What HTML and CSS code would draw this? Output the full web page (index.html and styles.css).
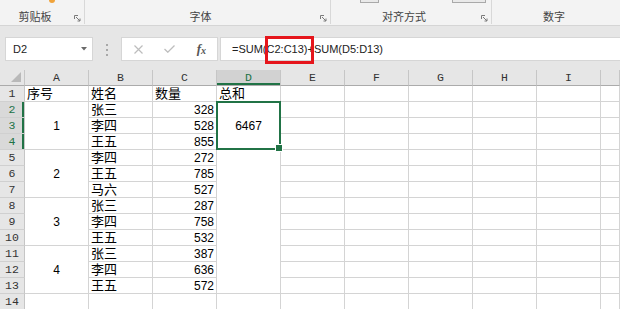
FILE: index.html
```html
<!DOCTYPE html>
<html lang="zh">
<head>
<meta charset="utf-8">
<link rel="stylesheet" href="styles.css">
</head>
<body>
<div class="ribbon">
  <div class="group g1">
    <div class="tools"><span class="paste"></span></div>
    <div class="labelrow"><span class="label">剪贴板</span><svg class="launch" width="7" height="7" viewBox="0 0 7 7"><path d="M0.5 4V0.5H4M2 2L6 6M6 3.5V6H3.5" fill="none" stroke="#7a7a7a" stroke-width="1"/></svg></div>
  </div>
  <div class="group g2">
    <div class="tools"></div>
    <div class="labelrow"><span class="label">字体</span><svg class="launch" width="7" height="7" viewBox="0 0 7 7"><path d="M0.5 4V0.5H4M2 2L6 6M6 3.5V6H3.5" fill="none" stroke="#7a7a7a" stroke-width="1"/></svg></div>
  </div>
  <div class="group g3">
    <div class="tools"><span class="btn b1"></span><span class="btn b2"></span></div>
    <div class="labelrow"><span class="label">对齐方式</span><svg class="launch" width="7" height="7" viewBox="0 0 7 7"><path d="M0.5 4V0.5H4M2 2L6 6M6 3.5V6H3.5" fill="none" stroke="#7a7a7a" stroke-width="1"/></svg></div>
  </div>
  <div class="group g4">
    <div class="tools"></div>
    <div class="labelrow"><span class="label">数字</span></div>
  </div>
</div>

<div class="fbar">
  <div class="namebox"><span>D2</span><svg width="6" height="4" viewBox="0 0 6 4"><path d="M0 0H6L3 3.5Z" fill="#6a6a6a"/></svg></div>
  <div class="dots"><i></i><i></i><i></i></div>
  <div class="funcbox">
    <span class="slot"><svg width="9" height="9" viewBox="0 0 9 9"><path d="M0.5 0.5L8.5 8.5M8.5 0.5L0.5 8.5" stroke="#bdbdbd" stroke-width="1.2"/></svg></span>
    <span class="slot"><svg width="11" height="8" viewBox="0 0 11 8"><path d="M0.5 4L3.8 7.2L10.5 0.5" fill="none" stroke="#bdbdbd" stroke-width="1.3"/></svg></span>
    <span class="slot fx">f<span class="x">x</span></span>
  </div>
  <div class="formula"><span class="ftext">=SUM(C2:C13)+SUM(D5:D13)</span><span class="redbox"></span></div>
</div>

<div class="sheet">
  <div class="corner"><svg width="10" height="10" viewBox="0 0 10 10"><path d="M10 0V10H0Z" fill="#b9b9b9"/></svg></div>
  <div class="ch">A</div><div class="ch">B</div><div class="ch">C</div><div class="ch selh">D</div><div class="ch">E</div><div class="ch">F</div><div class="ch">G</div><div class="ch">H</div><div class="ch">I</div><div class="ch"></div>

  <div class="rh">1</div><div class="c t">序号</div><div class="c t">姓名</div><div class="c t">数量</div><div class="c t">总和</div><div class="c"></div><div class="c"></div><div class="c"></div><div class="c"></div><div class="c"></div><div class="c"></div>

  <div class="rh selr">2</div><div class="c m r3">1</div><div class="c t">张三</div><div class="c n">328</div><div class="c m r3 sel">6467</div><div class="c"></div><div class="c"></div><div class="c"></div><div class="c"></div><div class="c"></div><div class="c"></div>
  <div class="rh selr">3</div><div class="c t">李四</div><div class="c n">528</div><div class="c"></div><div class="c"></div><div class="c"></div><div class="c"></div><div class="c"></div><div class="c"></div>
  <div class="rh selr">4</div><div class="c t">王五</div><div class="c n">855</div><div class="c"></div><div class="c"></div><div class="c"></div><div class="c"></div><div class="c"></div><div class="c"></div>

  <div class="rh">5</div><div class="c m r3">2</div><div class="c t">李四</div><div class="c n">272</div><div class="c r9"></div><div class="c"></div><div class="c"></div><div class="c"></div><div class="c"></div><div class="c"></div><div class="c"></div>
  <div class="rh">6</div><div class="c t">王五</div><div class="c n">785</div><div class="c"></div><div class="c"></div><div class="c"></div><div class="c"></div><div class="c"></div><div class="c"></div>
  <div class="rh">7</div><div class="c t">马六</div><div class="c n">527</div><div class="c"></div><div class="c"></div><div class="c"></div><div class="c"></div><div class="c"></div><div class="c"></div>

  <div class="rh">8</div><div class="c m r3">3</div><div class="c t">张三</div><div class="c n">287</div><div class="c"></div><div class="c"></div><div class="c"></div><div class="c"></div><div class="c"></div><div class="c"></div>
  <div class="rh">9</div><div class="c t">李四</div><div class="c n">758</div><div class="c"></div><div class="c"></div><div class="c"></div><div class="c"></div><div class="c"></div><div class="c"></div>
  <div class="rh">10</div><div class="c t">王五</div><div class="c n">532</div><div class="c"></div><div class="c"></div><div class="c"></div><div class="c"></div><div class="c"></div><div class="c"></div>

  <div class="rh">11</div><div class="c m r3">4</div><div class="c t">张三</div><div class="c n">387</div><div class="c"></div><div class="c"></div><div class="c"></div><div class="c"></div><div class="c"></div><div class="c"></div>
  <div class="rh">12</div><div class="c t">李四</div><div class="c n">636</div><div class="c"></div><div class="c"></div><div class="c"></div><div class="c"></div><div class="c"></div><div class="c"></div>
  <div class="rh">13</div><div class="c t">王五</div><div class="c n">572</div><div class="c"></div><div class="c"></div><div class="c"></div><div class="c"></div><div class="c"></div><div class="c"></div>

  <div class="rh">14</div><div class="c"></div><div class="c"></div><div class="c"></div><div class="c"></div><div class="c"></div><div class="c"></div><div class="c"></div><div class="c"></div><div class="c"></div><div class="c"></div>
</div>
</body>
</html>
```

FILE: styles.css
```css
* { box-sizing: border-box; }
html, body { margin: 0; padding: 0; }
body {
  width: 620px;
  height: 309px;
  overflow: hidden;
  background: #fff;
  font-family: "Liberation Sans", "Noto Sans CJK SC", sans-serif;
}

/* Ribbon */
.ribbon {
  display: flex;
  height: 26px;
  background: #f3f3f3;
  border-bottom: 1px solid #d5d5d5;
}
.group {
  display: flex;
  flex-direction: column;
  justify-content: space-between;
  border-right: 1px solid #d8d8d8;
  height: 24px;
}
.g1 { width: 85px; }
.g2 { width: 246px; }
.g3 { width: 161px; }
.g4 { flex: 1; border-right: none; padding-right: 4px; }
.tools { display: flex; height: 3px; }
.paste {
  margin-left: 49px;
  width: 6px;
  height: 3px;
  background: #f0a33a;
  border-radius: 0 0 3px 3px;
}
.btn {
  height: 3px;
  background: #e9e9e9;
  border: 1px solid #a9a9a9;
  border-top: none;
}
.b1 { margin-left: 29px; width: 19px; }
.b2 { margin-left: 73px; width: 34px; }
.labelrow {
  display: flex;
  align-items: center;
  height: 14px;
}
.label {
  flex: 1;
  text-align: center;
  font-size: 11px;
  line-height: 14px;
  color: #444;
}
.launch { margin: 3px 3px 0 4px; flex: none; }

/* Formula bar */
.fbar {
  display: flex;
  align-items: flex-start;
  height: 44px;
  padding: 11px 0 0 5px;
  background: #e6e6e6;
}
.namebox {
  display: flex;
  align-items: center;
  justify-content: space-between;
  width: 88px;
  height: 24px;
  padding: 0 5px 0 7px;
  background: #fff;
  border: 1px solid #d6d6d6;
  font-size: 11px;
  color: #222;
}
.dots {
  display: flex;
  flex-direction: column;
  align-items: center;
  gap: 3px;
  width: 28px;
  padding-top: 7px;
}
.dots i {
  display: block;
  width: 2px;
  height: 2px;
  background: #a8a8a8;
}
.funcbox {
  display: flex;
  align-items: center;
  width: 97px;
  height: 24px;
  padding-left: 1px;
  background: #fff;
  border: 1px solid #d6d6d6;
}
.slot {
  display: flex;
  justify-content: center;
  align-items: center;
  width: 32px;
}
.fx {
  font-family: "Liberation Serif", serif;
  font-style: italic;
  font-weight: bold;
  font-size: 13px;
  color: #555;
}
.fx .x { font-size: 10px; margin-top: 3px; }
.formula {
  position: relative;
  flex: 1;
  display: flex;
  align-items: center;
  height: 24px;
  margin-left: 2px;
  padding-left: 11px;
  background: #fff;
  border: 1px solid #d6d6d6;
  border-right: none;
  font-size: 11px;
  color: #222;
}
.redbox {
  position: absolute;
  left: 44px;
  top: -2px;
  width: 49px;
  height: 28px;
  border: 3px solid #e5151b;
}

/* Sheet */
.sheet {
  display: grid;
  grid-template-columns: 25px repeat(9, 64px) 19px;
  grid-template-rows: 16px;
  grid-auto-rows: 16px;
}
.corner {
  display: flex;
  justify-content: flex-end;
  align-items: flex-end;
  padding: 0 3px 3px 0;
  background: #e6e6e6;
  border-right: 1px solid #c6c6c6;
  border-bottom: 1px solid #ababab;
}
.ch {
  background: #e6e6e6;
  border-right: 1px solid #c6c6c6;
  border-bottom: 1px solid #ababab;
  text-align: center;
  font-family: "Liberation Mono", monospace;
  font-size: 11.5px;
  line-height: 16px;
  color: #333;
}
.selh {
  background: #d2d2d2;
  color: #217346;
  box-shadow: inset 0 -2px 0 #217346;
}
.rh {
  background: #e6e6e6;
  border-right: 1px solid #c6c6c6;
  border-bottom: 1px solid #d0d0d0;
  text-align: center;
  font-family: "Liberation Mono", monospace;
  font-size: 11.5px;
  line-height: 16px;
  color: #333;
}
.selr {
  background: #d9d9d9;
  color: #217346;
  box-shadow: inset -2px 0 0 #217346;
}
.c {
  border-right: 1px solid #d4d4d4;
  border-bottom: 1px solid #d4d4d4;
  color: #000;
}
.t {
  padding-left: 2px;
  font-size: 13px;
  line-height: 15px;
  white-space: nowrap;
}
.n {
  padding-right: 2px;
  text-align: right;
  font-size: 12px;
  line-height: 16px;
}
.m {
  display: flex;
  align-items: center;
  justify-content: center;
  font-size: 12px;
}
.r3 { grid-row: span 3; }
.r9 { grid-row: span 9; }
.sel { position: relative; z-index: 2; }
.sel::before {
  content: "";
  position: absolute;
  top: -1px;
  left: -1px;
  right: -1px;
  bottom: -1px;
  border: 2px solid #217346;
}
.sel::after {
  content: "";
  position: absolute;
  right: -3px;
  bottom: -3px;
  width: 6px;
  height: 6px;
  background: #217346;
  border: 1px solid #fff;
}
```
